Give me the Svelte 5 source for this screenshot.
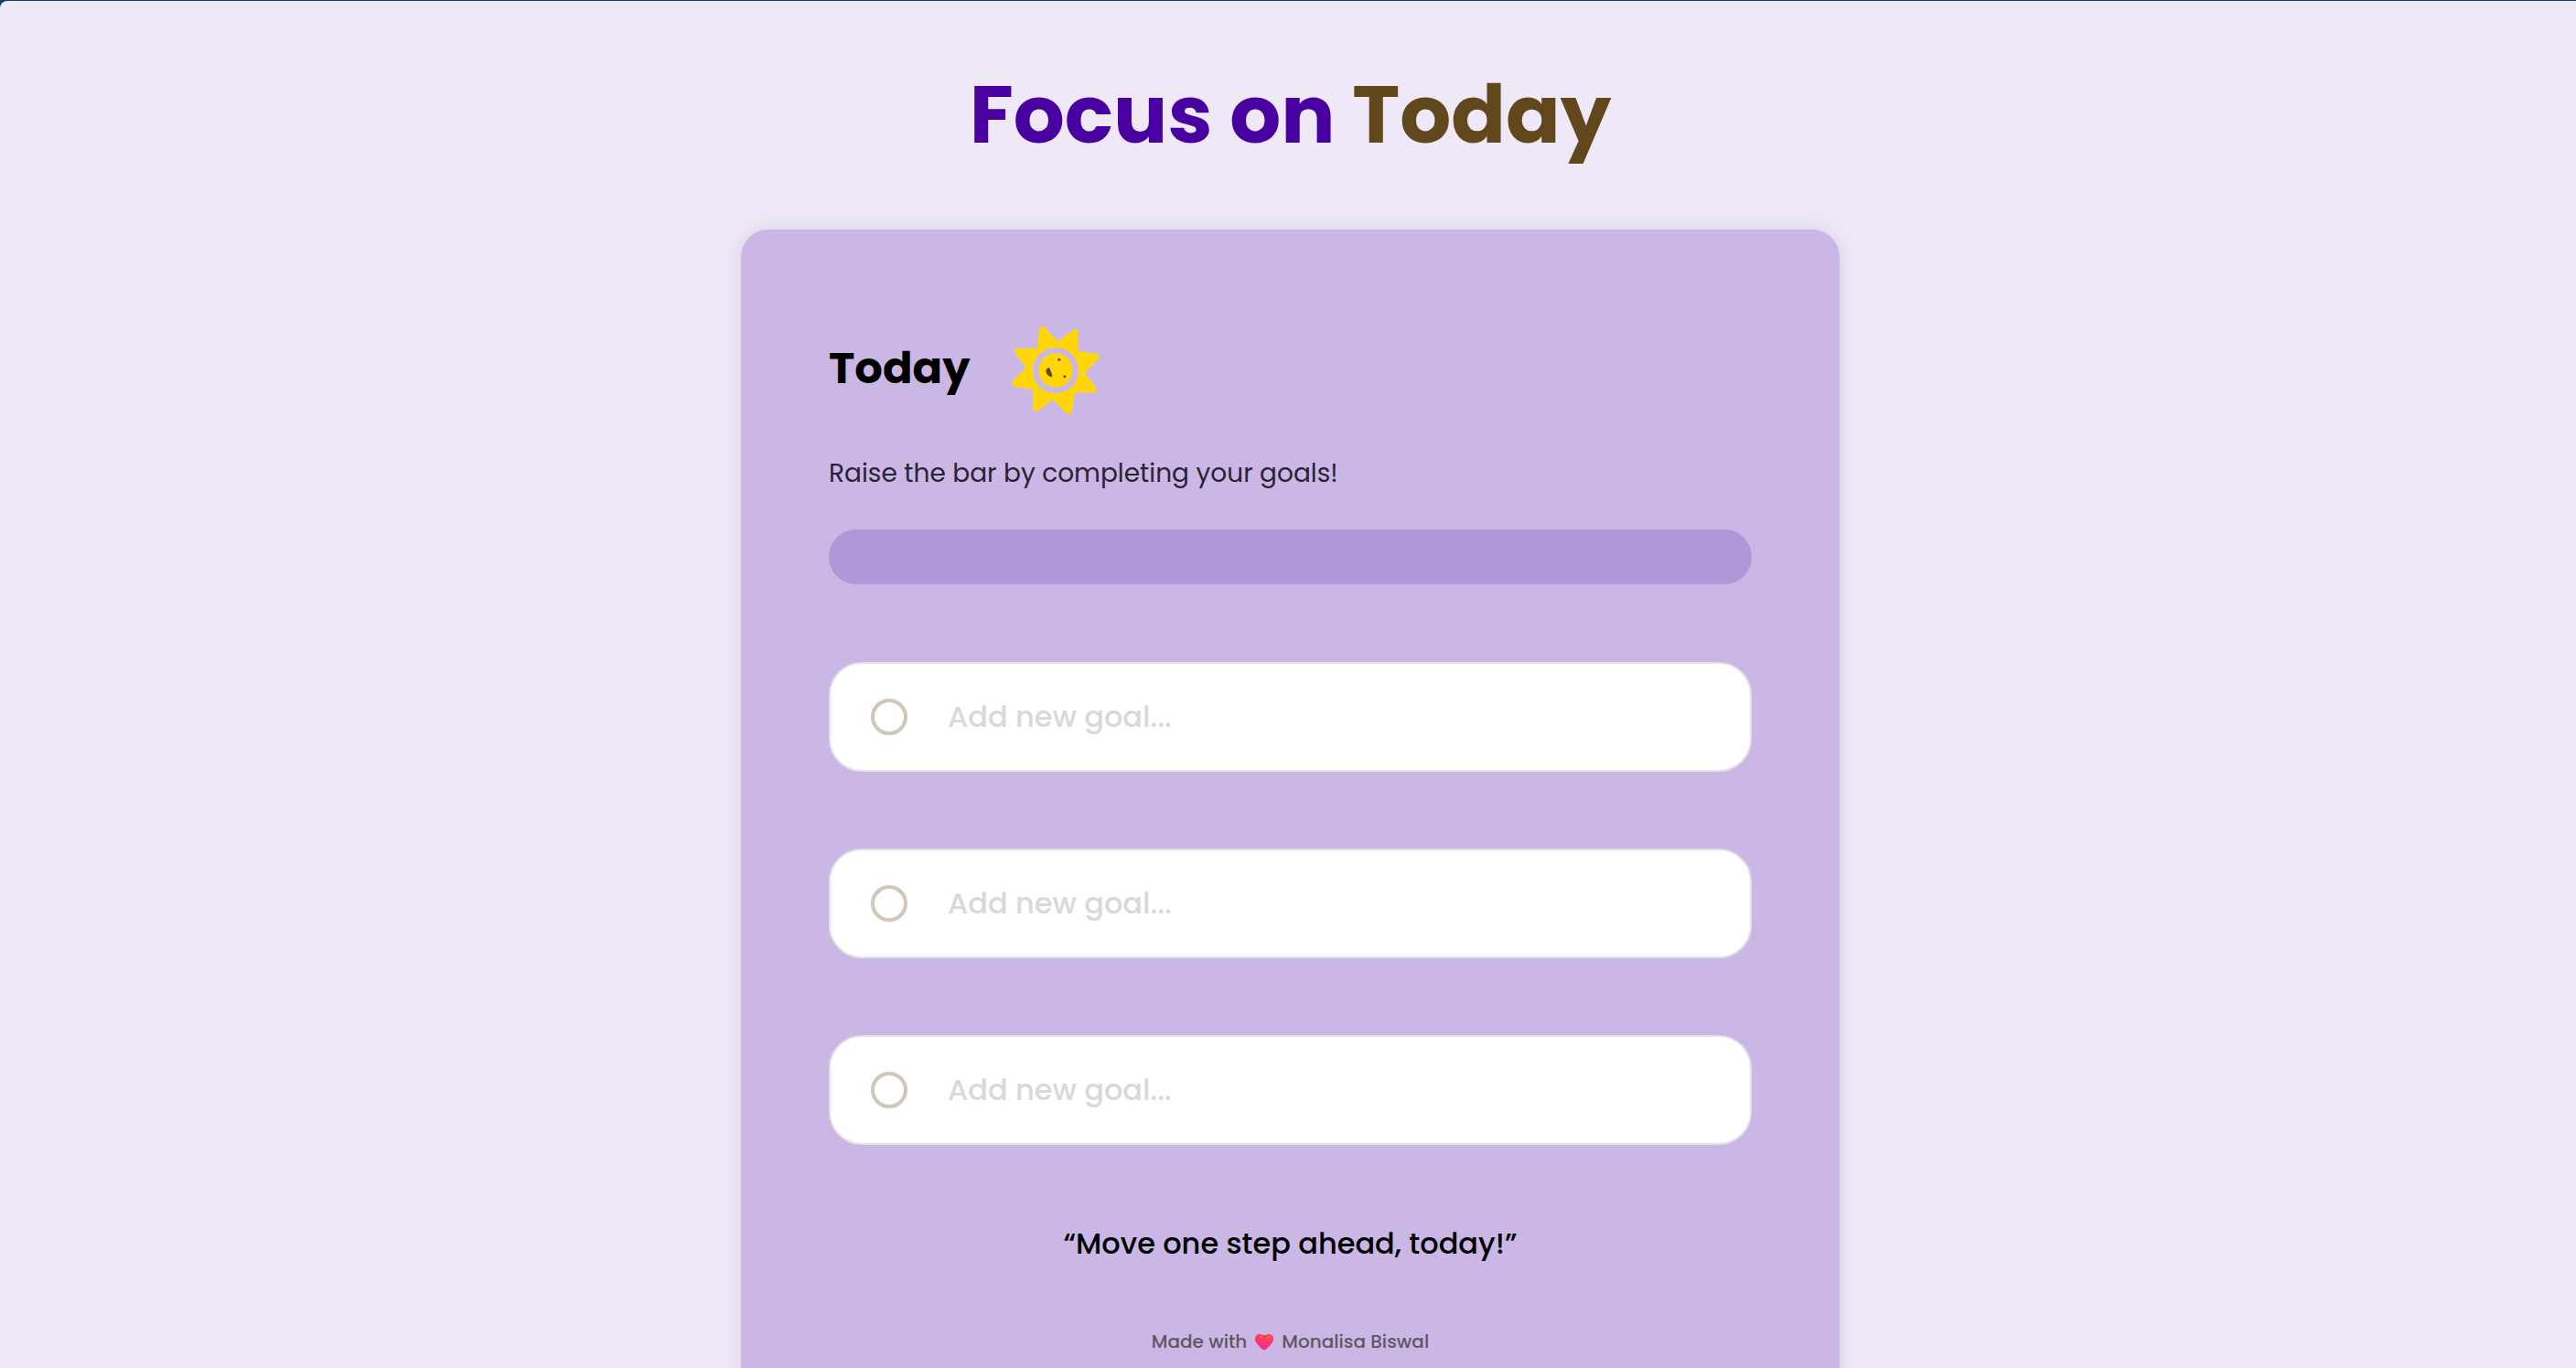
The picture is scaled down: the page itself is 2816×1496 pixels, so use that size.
<script>
  let goals = $state([
    { name: '', done: false },
    { name: '', done: false },
    { name: '', done: false },
  ]);
  let completed = $derived(goals.filter((goal) => goal.done && goal.name).length);
</script>

<div class="page">
  <h1>Focus on <span>Today</span></h1>

  <main class="card">
    <header>
      <h2>Today</h2>
      <svg class="sun" viewBox="48 53 288 288" aria-hidden="true">
        <path fill="#ffd60a" d="M138 62Q140 53 149 53Q155 53 158 58L199 101L249 65Q260 59 265 66Q267 70 266 78L265 133L326 143Q337 146 335 155Q334 159 330 162L288 205L326 256Q330 262 325 268Q323 270 315 270L255 270L245 331Q243 340 236 341Q230 341 226 337L184 293L135 328Q128 334 121 330Q117 327 118 319L118 260L57 250Q48 248 48 240Q48 236 52 231L95 189L60 141Q55 133 59 127Q61 124 68 124L131 124Z" />
        <circle cx="192" cy="197" r="65.5" fill="#ffd60a" stroke="#cbb7e6" stroke-width="19" />
        <path fill="#63471c" d="M170 188L173 192L181 213Q182 217 177 219Q166 216 162 207Q158 196 164 191Z" />
        <circle cx="203.500" cy="161.500" r="4.500" fill="#63471c" />
        <circle cx="221.500" cy="217" r="4.500" fill="#63471c" />
      </svg>
    </header>

    <p class="intro">Raise the bar by completing your goals!</p>

    <div class="progress" role="progressbar" aria-label="Goals completed" aria-valuemin="0" aria-valuemax={goals.length} aria-valuenow={completed}>
      <div class="value" style:width="{(completed / goals.length) * 100}%"></div>
    </div>

    <ul class="goals">
      {#each goals as goal, i}
        <li>
          <input type="checkbox" aria-label="Complete goal {i + 1}" bind:checked={goal.done} />
          <input type="text" placeholder="Add new goal..." aria-label="Goal {i + 1}" bind:value={goal.name} />
        </li>
      {/each}
    </ul>

    <p class="quote">“Move one step ahead, today!”</p>

    <footer>
      <span>Made with</span>
      <svg viewBox="0 0 20 17" role="img" aria-label="love">
        <defs>
          <linearGradient id="heart" x1="0" y1="0" x2="0" y2="1">
            <stop offset="0" stop-color="#ff3d52" />
            <stop offset="0.5" stop-color="#fb3668" />
            <stop offset="1" stop-color="#f22ba8" />
          </linearGradient>
          <radialGradient id="shine" cx="0.5" cy="0.4" r="0.5">
            <stop offset="0" stop-color="#ff6a4d" />
            <stop offset="1" stop-color="#ff405e" stop-opacity="0" />
          </radialGradient>
          <linearGradient id="fold" x1="0" y1="0" x2="0" y2="1">
            <stop offset="0" stop-color="#c92a50" />
            <stop offset="1" stop-color="#e2365c" stop-opacity="0" />
          </linearGradient>
        </defs>
        <path fill="url(#heart)" d="M10 1.800C7-0.700 3-0.500 1.200 1.500C-0.500 3.500-0.300 7 1.500 9.500C3.500 12.500 6 15 8 16.500Q10 17.500 12 16.500C14 15 16.500 12.500 18.500 9.500C20.300 7 20.500 3.500 18.800 1.500C17-0.500 13-0.700 10 1.800Z" />
        <ellipse cx="7" cy="4.500" rx="4" ry="4" fill="url(#shine)" />
        <ellipse cx="14" cy="5" rx="5" ry="5" fill="url(#shine)" />
        <path fill="url(#fold)" d="M9 2.200L10 1.500L11.500 2L11 5L9.500 8Z" />
      </svg>
      <span>Monalisa Biswal</span>
    </footer>
  </main>
</div>

<style>
  :global(body) {
    margin: 0;
    background: #0b4171;
  }

  .page {
    box-sizing: border-box;
    height: calc(100vh - 1px);
    margin-top: 1px;
    padding: 59px 0 0 5px;
    overflow-y: auto;
    scrollbar-width: none;
    background: #efe8f7;
    border-top-left-radius: 8px;
    font-family: Poppins, Inter, sans-serif;
    color: #000;
  }

  h1,
  h2,
  p {
    margin: 0;
  }

  h1 {
    color: #4800a0;
    font-size: 88px;
    font-weight: 700;
    line-height: 132px;
    text-align: center;
  }

  h1 span {
    color: #61481c;
  }

  .card {
    box-sizing: border-box;
    width: 100%;
    max-width: 1201px;
    margin: 59px auto 96px;
    padding: 106px 96px 96px;
    border-radius: 30px;
    background: #cbb7e6;
    box-shadow: 0 0 20px rgb(0 0 0 / 10%);
  }

  header {
    display: flex;
    align-items: center;
    gap: 46px;
  }

  h2 {
    padding-bottom: 4px;
    font-size: 48px;
    font-weight: 700;
    line-height: 72px;
  }

  .sun {
    width: 96px;
    height: 96px;
  }

  .intro {
    margin-top: 44px;
    color: #292332;
    font-size: 28px;
    line-height: 42px;
  }

  .progress {
    height: 60px;
    margin-top: 40px;
    overflow: hidden;
    border-radius: 30px;
    background: #ae98d9;
  }

  .value {
    height: 100%;
    border-radius: 30px;
    background: #4800a0;
  }

  .goals {
    display: grid;
    gap: 84px;
    margin: 85px 0 84px;
    padding: 0;
    list-style: none;
  }

  li {
    display: flex;
    align-items: center;
    gap: 44px;
    box-sizing: border-box;
    min-height: 120px;
    padding: 0 44px;
    border: 2px solid #e4e2e4;
    border-radius: 36px;
    background: #fff;
  }

  input {
    margin: 0;
  }

  input[type='checkbox'] {
    appearance: none;
    flex: none;
    box-sizing: border-box;
    width: 40px;
    height: 40px;
    border: 4px solid #cfc7b9;
    border-radius: 50%;
  }

  input[type='checkbox']:checked {
    background: #cfc7b9;
  }

  input[type='text'] {
    flex: 1;
    min-width: 0;
    padding: 0;
    border: 0;
    outline: 0;
    background: none;
    color: #000;
    font-family: inherit;
    font-size: 32px;
    font-weight: 500;
    line-height: 48px;
  }

  input::placeholder {
    color: #d9d9d9;
    opacity: 1;
  }

  .quote {
    font-size: 32px;
    font-weight: 500;
    line-height: 48px;
    text-align: center;
  }

  footer {
    display: flex;
    align-items: center;
    justify-content: center;
    gap: 9px;
    margin-top: 68px;
    color: #5c5761;
    font-size: 20px;
    font-weight: 500;
    line-height: 30px;
  }

  footer svg {
    width: 20px;
    height: 17px;
  }
</style>
